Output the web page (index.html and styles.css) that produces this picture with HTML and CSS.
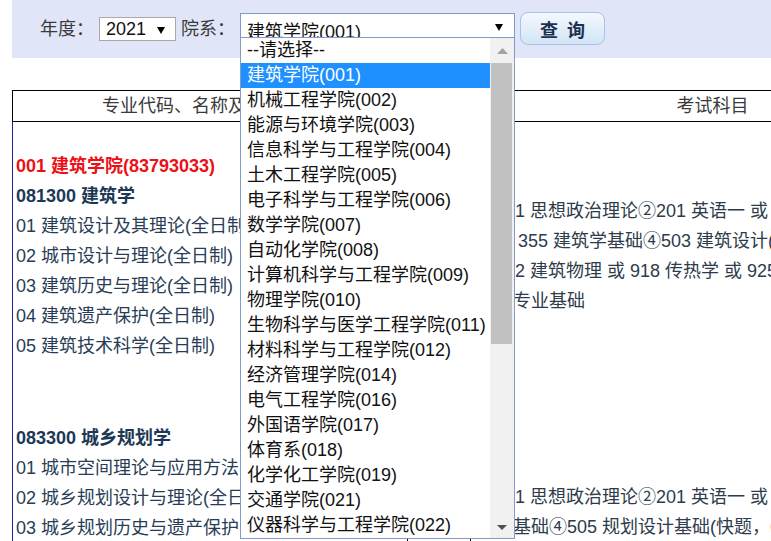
FILE: index.html
```html
<!DOCTYPE html>
<html lang="zh-CN">
<head>
<meta charset="utf-8">
<title>专业目录查询</title>
<link rel="stylesheet" href="styles.css">
</head>
<body>
<div class="page">
  <div class="bar">
    <span class="label">年度：</span>
    <div class="sel sel-year"><span class="val">2021</span><svg class="arrow" width="8" height="7" viewBox="0 0 8 7"><polygon points="0,0 8,0 4,7" fill="#000"/></svg></div>
    <span class="label label-dept">院系：</span>
    <div class="sel sel-dept"><span class="val">建筑学院(001)</span><svg class="arrow" width="8" height="7" viewBox="0 0 8 7"><polygon points="0,0 8,0 4,7" fill="#000"/></svg></div>
    <button class="btn" type="button">查 询</button>
  </div>

  <table class="list">
    <colgroup><col class="c1"><col class="c2"><col class="c3"></colgroup>
    <thead>
      <tr><th>专业代码、名称及研究方向</th><th>人数</th><th>考试科目</th></tr>
    </thead>
    <tbody>
      <tr>
        <td class="major">
          <div class="line dept-title">001 建筑学院(83793033)</div>
          <div class="line major-title">081300 建筑学</div>
          <div class="line dir">01 建筑设计及其理论(全日制)</div>
          <div class="line dir">02 城市设计与理论(全日制)</div>
          <div class="line dir">03 建筑历史与理论(全日制)</div>
          <div class="line dir">04 建筑遗产保护(全日制)</div>
          <div class="line dir">05 建筑技术科学(全日制)</div>
          <div class="gap"></div>
          <div class="line major-title">083300 城乡规划学</div>
          <div class="line dir">01 城市空间理论与应用方法(全日制)</div>
          <div class="line dir">02 城乡规划设计与理论(全日制)</div>
          <div class="line dir">03 城乡规划历史与遗产保护(全日制)</div>
        </td>
        <td class="num"></td>
        <td class="exam">
          <div class="group">
            <div class="line">①101 思想政治理论②201 英语一 或 203 日</div>
            <div class="line">语③ 355 建筑学基础④503 建筑设计(6小时快题)</div>
            <div class="line">⑤502 建筑物理 或 918 传热学 或 925 建筑</div>
            <div class="line">技术专业基础</div>
          </div>
          <div class="group group2">
            <div class="line">①101 思想政治理论②201 英语一 或 203 日语③356 城乡</div>
            <div class="line">规划基础④505 规划设计基础(快题，6小时)</div>
          </div>
        </td>
      </tr>
    </tbody>
  </table>

  <div class="popup">
    <div class="options">
      <div class="opt">--请选择--</div>
      <div class="opt opt-on">建筑学院(001)</div>
      <div class="opt">机械工程学院(002)</div>
      <div class="opt">能源与环境学院(003)</div>
      <div class="opt">信息科学与工程学院(004)</div>
      <div class="opt">土木工程学院(005)</div>
      <div class="opt">电子科学与工程学院(006)</div>
      <div class="opt">数学学院(007)</div>
      <div class="opt">自动化学院(008)</div>
      <div class="opt">计算机科学与工程学院(009)</div>
      <div class="opt">物理学院(010)</div>
      <div class="opt">生物科学与医学工程学院(011)</div>
      <div class="opt">材料科学与工程学院(012)</div>
      <div class="opt">经济管理学院(014)</div>
      <div class="opt">电气工程学院(016)</div>
      <div class="opt">外国语学院(017)</div>
      <div class="opt">体育系(018)</div>
      <div class="opt">化学化工学院(019)</div>
      <div class="opt">交通学院(021)</div>
      <div class="opt">仪器科学与工程学院(022)</div>
    </div>
    <div class="scroll">
      <div class="sbtn"><svg width="11" height="6" viewBox="0 0 11 6"><polygon points="0,6 11,6 5.5,0" fill="#a3a3a3"/></svg></div>
      <div class="thumb"></div>
      <div class="track"></div>
      <div class="sbtn sbtn-down"><svg width="10" height="5" viewBox="0 0 10 5"><polygon points="0,0 10,0 5,5" fill="#505050"/></svg></div>
    </div>
  </div>
</div>
</body>
</html>
```

FILE: styles.css
```css
html, body {
  margin: 0;
  padding: 0;
  overflow: hidden;
  background: #fff;
}

body {
  font-family: "Liberation Sans", "Noto Sans CJK SC", sans-serif;
  font-size: 18px;
  color: #333;
}

.page {
  position: relative;
  margin-left: 12px;
  width: 960px;
}

/* ---- top query bar ---- */
.bar {
  box-sizing: border-box;
  height: 58px;
  background: #e0e6f8;
  display: flex;
  align-items: flex-start;
  padding: 12px 0 0 28px;
}

.label {
  margin-top: 5px;
  line-height: 24px;
  color: #3a3a3a;
  margin-right: 5px;
  white-space: nowrap;
}

.label-dept {
  margin-left: 5px;
}

.sel {
  box-sizing: border-box;
  background: #fff;
  display: flex;
  align-items: center;
  justify-content: space-between;
  color: #111;
  white-space: nowrap;
}

.sel-year {
  width: 77px;
  height: 24px;
  margin-top: 5px;
  border: 1px solid #a9a9a9;
  padding: 0 10px 0 6px;
}

.sel-year .arrow {
  margin-top: 2px;
}

.sel-dept {
  width: 275px;
  height: 28px;
  margin-top: 1px;
  border: 1px solid #7a9bd4;
  padding: 0 11px 0 6px;
}

.sel-dept .val {
  padding-top: 6px;
}

.btn {
  box-sizing: border-box;
  width: 85px;
  height: 33px;
  margin-left: 5px;
  padding: 0;
  border: 1px solid #a3c4e6;
  border-radius: 8px;
  background: linear-gradient(to bottom, #f4f9fe, #d2e4f6);
  font: inherit;
  font-weight: bold;
  word-spacing: 4px;
  color: #1e3050;
}

/* ---- result table ---- */
.list {
  margin-top: 32px;
  border-collapse: collapse;
  table-layout: fixed;
  width: 942px;
}

.c1 { width: 395px; }
.c2 { width: 63px; }
.c3 { width: 484px; }

.list th {
  height: 30px;
  line-height: 30px;
  padding: 0;
  font-weight: normal;
  color: #3a3a3a;
  border: 1px solid #000;
  text-align: center;
  white-space: nowrap;
  overflow: hidden;
}

.list td {
  vertical-align: top;
  padding: 0;
  border: 1px solid #000;
  border-top: none;
}

.list td.major {
  border-left-color: #1f1fa0;
  padding: 29px 0 0 3px;
}

.line {
  height: 30px;
  line-height: 30px;
  white-space: nowrap;
}

.dept-title {
  color: #ec1018;
  font-weight: bold;
}

.major-title {
  color: #1d3856;
  font-weight: bold;
}

.dir {
  color: #283d55;
}

.gap {
  height: 62px;
}

.list td.exam {
  padding: 74px 0 0 6px;
  color: #2e3b4a;
}

.group2 {
  margin-top: 166px;
}

/* ---- opened dropdown ---- */
.popup {
  position: absolute;
  left: 228px;
  top: 37px;
  z-index: 2;
  box-sizing: border-box;
  width: 275px;
  height: 502px;
  border: 1px solid #7f9dc8;
  background: #fff;
  display: flex;
}

.options {
  flex: 1;
}

.opt {
  height: 25px;
  line-height: 25px;
  padding-left: 6px;
  color: #111;
  white-space: nowrap;
}

.opt-on {
  background: #1e90ff;
  color: #fff;
}

.scroll {
  width: 24px;
  background: #f1f1f1;
  display: flex;
  flex-direction: column;
}

.sbtn {
  height: 25px;
  display: flex;
  align-items: center;
  justify-content: center;
}

.sbtn-down {
  height: 22px;
}

.thumb {
  height: 281px;
  margin: 0 2px 0 1px;
  background: #c1c1c1;
}

.track {
  flex: 1;
}
```
